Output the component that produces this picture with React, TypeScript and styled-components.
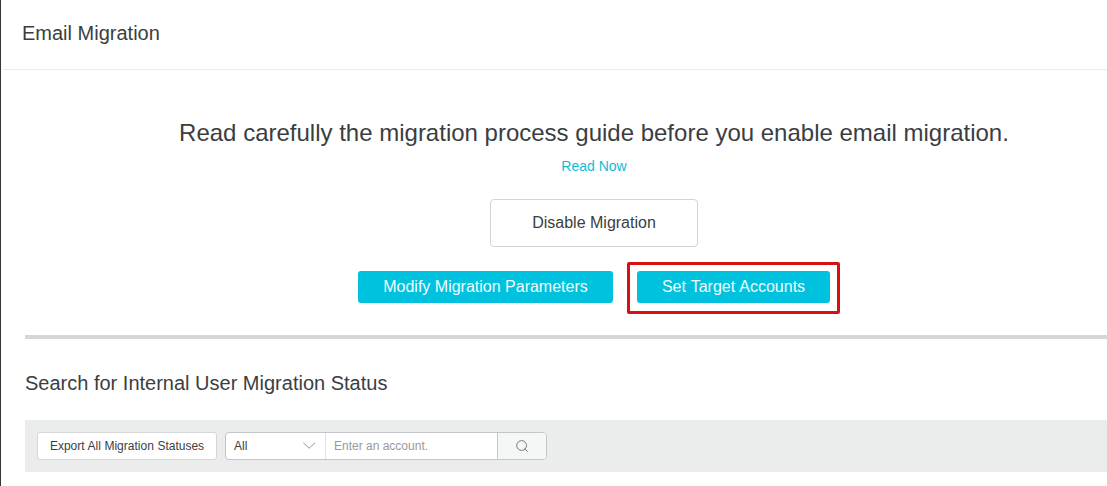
import React, { useState } from "react";
import styled, { createGlobalStyle } from "styled-components";

const GlobalStyle = createGlobalStyle`
  * {
    box-sizing: border-box;
  }

  body {
    margin: 0;
    overflow: hidden;
    background-color: #fff;
    color: #3b3e41;
    font-family: "Liberation Sans", Arial, sans-serif;
  }

  button,
  input {
    font-family: inherit;
  }
`;

const Page = styled.main`
  height: 100vh;
  overflow: hidden;
  border-left: 1px solid #36373a;
`;

const Header = styled.header`
  height: 70px;
  margin-left: 2px;
  padding: 0 19px;
  border-bottom: 1px solid #ebecec;

  h1 {
    margin: 0;
    font-size: 20px;
    font-weight: normal;
    line-height: 66px;
  }
`;

/* the content is wider than the window and runs off its right edge */
const Content = styled.div`
  width: 1138px;
  margin-left: 24px;
`;

const Guide = styled.section`
  display: flex;
  flex-direction: column;
  align-items: center;
  height: 269px;
  padding-top: 47px;
  border-bottom: 4px solid #d5d6d6;

  h2 {
    margin: 0;
    font-size: 24px;
    font-weight: normal;
    line-height: 32px;
    white-space: nowrap;
  }

  a {
    margin: 7px 0 23px;
    color: #10bcd6;
    font-size: 14px;
    line-height: 20px;
    text-decoration: none;
  }
`;

const DisableButton = styled.button`
  width: 208px;
  height: 48px;
  padding: 0;
  border: 1px solid #d3d4d5;
  border-radius: 4px;
  background-color: #fff;
  color: #3b3e41;
  font-size: 16px;
`;

const Actions = styled.div`
  display: flex;
  gap: 24px;
  margin-top: 24px;
`;

const PrimaryButton = styled.button<{ $width: number; $marked?: boolean }>`
  position: relative;
  width: ${(props) => props.$width}px;
  height: 32px;
  padding: 0;
  border: 0;
  border-radius: 3px;
  background-color: #00c1de;
  color: #f0feff;
  font-size: 16px;
  word-spacing: ${(props) => (props.$marked ? "0.6px" : "normal")};

  &::after {
    content: "";
    display: ${(props) => (props.$marked ? "block" : "none")};
    position: absolute;
    inset: -9px -10px -11px;
    border: 3px solid #d81014;
    border-radius: 2px;
  }
`;

const Search = styled.section`
  h3 {
    margin: 0;
    padding: 32px 0 25px;
    font-size: 20px;
    font-weight: normal;
    line-height: 24px;
  }
`;

const Toolbar = styled.div`
  display: flex;
  align-items: center;
  gap: 8px;
  height: 52px;
  padding: 0 12px;
  background-color: #ebecec;
`;

const ExportButton = styled.button`
  width: 180px;
  height: 28px;
  padding: 0;
  border: 1px solid #d5d6d7;
  border-radius: 3px;
  background-color: #fff;
  color: #3b3e41;
  font-size: 12px;
  word-spacing: 0.25px;
`;

const SearchGroup = styled.div`
  display: flex;
  width: 322px;
  height: 28px;
  overflow: hidden;
  border: 1px solid #c3c5c6;
  border-radius: 4px;
  background-color: #fff;
`;

const Select = styled.div`
  display: flex;
  align-items: center;
  justify-content: space-between;
  width: 100px;
  padding: 0 9px 0 8px;
  border-right: 1px solid #e1e2e3;
  font-size: 12px;
`;

const AccountInput = styled.input`
  width: 171px;
  padding: 0 8px;
  border: 0;
  outline: 0;
  background: none;
  color: #3b3e41;
  font-size: 12px;

  &::placeholder {
    color: #999;
    opacity: 1;
  }
`;

const SearchButton = styled.button`
  display: flex;
  flex: 1;
  align-items: center;
  justify-content: center;
  padding: 0;
  border: 0;
  border-left: 1px solid #c3c5c6;
  background-color: #f5f6f6;
`;

function ChevronIcon() {
  return (
    <svg width="13" height="8" viewBox="0 0 13 8" fill="none" stroke="#96999b">
      <path d="M0.4 0.9 6.2 6.2 12 0.9" />
    </svg>
  );
}

function SearchIcon() {
  return (
    <svg width="12" height="12" viewBox="0 0 12 12" fill="none" stroke="#77797b">
      <circle cx="5.6" cy="5.5" r="4.9" />
      <path d="M8.7 8.6 11.6 11.6" />
    </svg>
  );
}

export default function App() {
  const [account, setAccount] = useState("");

  return (
    <>
      <GlobalStyle />
      <Page>
        <Header>
          <h1>Email Migration</h1>
        </Header>
        <Content>
          <Guide>
            <h2>
              Read carefully the migration process guide before you enable email
              migration.
            </h2>
            <a href="#guide">Read Now</a>
            <DisableButton>Disable Migration</DisableButton>
            <Actions>
              <PrimaryButton $width={255}>
                Modify Migration Parameters
              </PrimaryButton>
              <PrimaryButton $width={193} $marked>
                Set Target Accounts
              </PrimaryButton>
            </Actions>
          </Guide>
          <Search>
            <h3>Search for Internal User Migration Status</h3>
            <Toolbar>
              <ExportButton>Export All Migration Statuses</ExportButton>
              <SearchGroup>
                <Select>
                  All
                  <ChevronIcon />
                </Select>
                <AccountInput
                  value={account}
                  onChange={(e) => setAccount(e.target.value)}
                  placeholder="Enter an account."
                />
                <SearchButton aria-label="Search">
                  <SearchIcon />
                </SearchButton>
              </SearchGroup>
            </Toolbar>
          </Search>
        </Content>
      </Page>
    </>
  );
}
